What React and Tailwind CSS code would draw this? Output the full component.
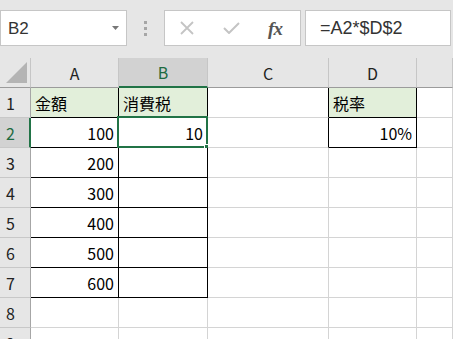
import React from 'react';

const COLS = [
  { key: 'A', w: 'w-[88px]' },
  { key: 'B', w: 'w-[89px]' },
  { key: 'C', w: 'w-[121px]' },
  { key: 'D', w: 'w-[88px]' },
  { key: 'E', w: 'flex-1' },
];

const data = {
  1: { A: { v: '金額', left: true, fill: true }, B: { v: '消費税', left: true, fill: true }, D: { v: '税率', left: true, fill: true } },
  2: { A: { v: '100' }, B: { v: '10' }, D: { v: '10%' } },
  3: { A: { v: '200' } },
  4: { A: { v: '300' } },
  5: { A: { v: '400' } },
  6: { A: { v: '500' } },
  7: { A: { v: '600' } },
};

// black borders for the table A1:B7 and D1:D2 (+ C right edge next to D)
function edge(row, col) {
  const inTable = row >= 1 && row <= 7 && (col === 'A' || col === 'B');
  const inRate = (row === 1 || row === 2) && col === 'D';
  const leftOfRate = (row === 1 || row === 2) && col === 'C';
  return {
    right: inTable || inRate || leftOfRate ? 'border-r-black' : 'border-r-[#d4d4d4]',
    bottom: inTable || inRate ? 'border-b-black' : 'border-b-[#d4d4d4]',
  };
}

function Toolbar() {
  return (
    <div className="h-[58px] bg-[#e6e6e6] flex items-start pt-[10px]">
      <div className="w-[127px] h-[36px] bg-white border border-[#c6c6c6] flex items-center justify-between pl-[7px] pr-[7px]">
        <span className="text-[17px] text-[#333] font-['Liberation_Sans',sans-serif]">B2</span>
        <svg width="7" height="4" viewBox="0 0 7 4"><path d="M0 0h7L3.5 4z" fill="#777" /></svg>
      </div>
      <div className="w-[37px] h-[36px] flex flex-col items-center justify-center gap-[3px]">
        <div className="w-[3px] h-[3px] bg-[#a6a6a6]" />
        <div className="w-[3px] h-[3px] bg-[#a6a6a6]" />
        <div className="w-[3px] h-[3px] bg-[#a6a6a6]" />
      </div>
      <div className="w-[137px] h-[36px] bg-white border border-[#c6c6c6] flex items-center">
        <div className="w-[44px] flex justify-center">
          <svg width="14" height="14" viewBox="0 0 14 14"><path d="M1 1l12 12M13 1L1 13" stroke="#c4c4c4" strokeWidth="1.8" /></svg>
        </div>
        <div className="w-[44px] flex justify-center">
          <svg width="17" height="12" viewBox="0 0 17 12"><path d="M1 6l5 5L16 1" stroke="#c4c4c4" strokeWidth="2" fill="none" /></svg>
        </div>
        <div className="w-[44px] flex justify-center">
          <span className="text-[19px] italic font-bold text-[#555] font-['Liberation_Serif',serif] tracking-[-1px]">fx</span>
        </div>
      </div>
      <div className="ml-[4px] w-[146px] h-[36px] bg-white border border-[#c6c6c6] flex items-center pl-[14px]">
        <span className="text-[18px] text-[#333] font-['Liberation_Sans',sans-serif]">=A2*$D$2</span>
      </div>
    </div>
  );
}

function HeaderRow() {
  return (
    <div className="flex h-[30px]">
      <div className="w-[31px] h-full bg-[#e6e6e6] border-r border-r-[#c6c6c6] border-b border-b-[#9b9b9b] relative">
        <svg className="absolute left-[6px] top-[4px]" width="22" height="22" viewBox="0 0 22 22"><path d="M21 0V21H0z" fill="#b4b4b4" /></svg>
      </div>
      {COLS.map(c => {
        const sel = c.key === 'B';
        return (
          <div key={c.key}
            className={`${c.w} h-full flex items-center justify-center border-r border-r-[#c6c6c6] ${sel ? 'bg-[#d2d2d2] border-b-2 border-b-[#217346] text-[#1e6b41]' : 'bg-[#e6e6e6] border-b border-b-[#9b9b9b] text-[#222]'}`}>
            {c.key === 'E' ? '' : c.key}
          </div>
        );
      })}
    </div>
  );
}

function Row({ n }) {
  const sel = n === 2;
  const cells = data[n] || {};
  return (
    <div className="flex h-[30px]">
      <div className={`w-[31px] h-full flex items-center pl-[6px] border-b border-b-[#c8c8c8] ${sel ? 'bg-[#d2d2d2] border-r-2 border-r-[#217346] text-[#1e6b41]' : 'bg-[#e6e6e6] border-r border-r-[#a6a6a6] text-[#222]'}`}>
        {n}
      </div>
      {COLS.map(c => {
        const cell = cells[c.key];
        const e = edge(n, c.key);
        return (
          <div key={c.key}
            className={`${c.w} h-full relative flex items-center border-r border-b ${e.right} ${e.bottom} ${cell && cell.fill ? 'bg-[#e2efda]' : 'bg-white'} ${cell && cell.left ? 'justify-start pl-[4px]' : 'justify-end pr-[4px]'} text-black`}>
            {cell ? cell.v : ''}
            {sel && c.key === 'B' && (
              <div className="absolute left-[-2px] top-[-2px] w-[91px] h-[32px] border-2 border-[#217346]">
                <div className="absolute left-[85px] top-[26px] w-[7px] h-[7px] bg-[#217346] border border-white" />
              </div>
            )}
          </div>
        );
      })}
    </div>
  );
}

export default function App() {
  return (
    <div className="w-[453px] h-[339px] overflow-hidden bg-white font-['Noto_Sans_CJK_JP',sans-serif] text-[16px] leading-none">
      <Toolbar />
      <HeaderRow />
      {[1, 2, 3, 4, 5, 6, 7, 8, 9].map(n => <Row key={n} n={n} />)}
    </div>
  );
}
